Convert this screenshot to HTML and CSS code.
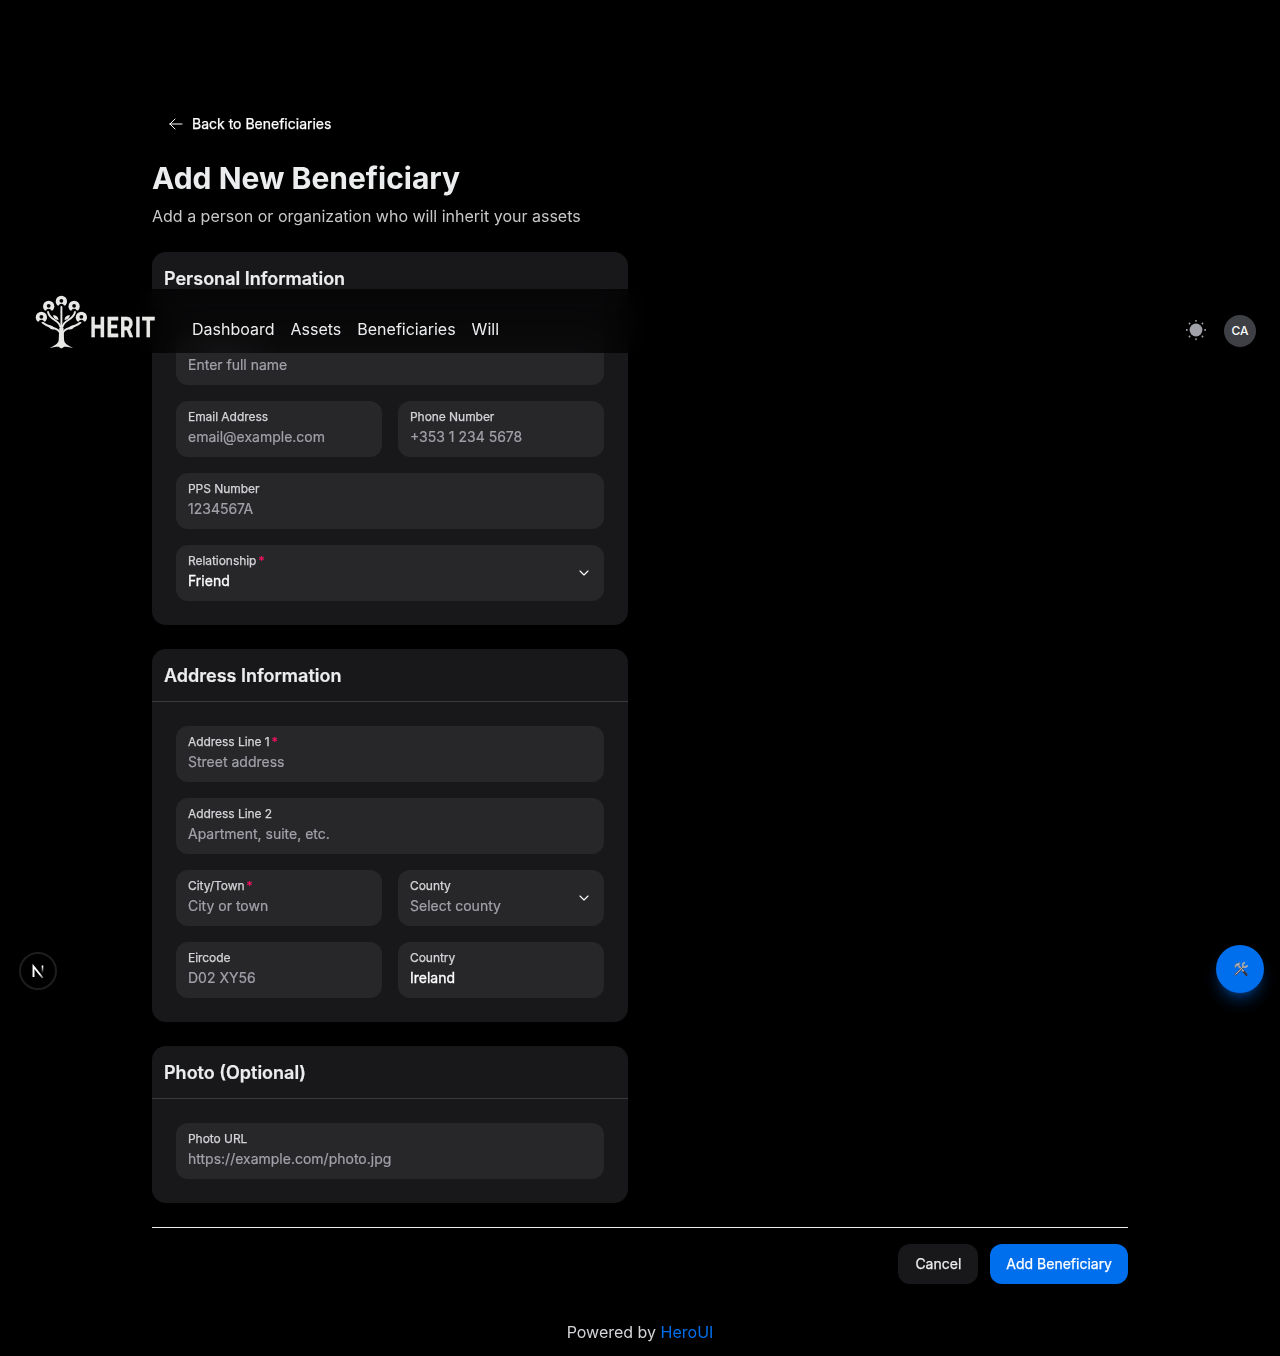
FILE: index.html
```html
<!DOCTYPE html>
<html lang="en">
<head>
<meta charset="utf-8">
<title>Add New Beneficiary</title>
<link rel="stylesheet" href="styles.css">
</head>
<body>
<nav class="navbar">
  <a class="brand" href="#" aria-label="Herit">
    <svg width="136" height="64" viewBox="0 0 136 64" fill="none">
      <g stroke="#e8e8e6" stroke-linecap="round">
        <path d="M29.400 50V18" stroke-width="1.900"/>
        <path d="M28.400 46C28 38 18 40 10.500 33.500" stroke-width="1.900"/>
        <path d="M30.400 46C31 38 41 40 48.500 33.500" stroke-width="1.900"/>
        <path d="M28.400 38C27 30 18 32 16 23" stroke-width="1.900"/>
        <path d="M30.400 38C32 30 41 32 43 23" stroke-width="1.900"/>
      </g>
      <path fill="#e8e8e6" d="M27.300 39h4.200l.6 12c.3 4 4 5.500 9 7.700-5-.5-7.500-1.300-9-.9-1 .8-1.600 1.500-2.700 1.500s-1.700-.7-2.700-1.500c-1.500-.4-4 .4-9 .9 5-2.200 8.700-3.700 9-7.700z"/>
      <path fill="#e8e8e6" d="M26.500 31c-3.500-.2-5.300-2-5.400-5 3.400.2 5.300 2 5.400 5zM32.500 31c3.500-.2 5.300-2 5.400-5-3.400.2-5.300 2-5.400 5zM22 40.500c-3.300.2-5-1.300-5.300-4.200 3.300 0 5.200 1.400 5.300 4.200zM37 40.500c3.300.2 5-1.300 5.300-4.200-3.300 0-5.200 1.400-5.300 4.200z"/>
      <g id="member">
        <path fill="#e8e8e6" d="M25.500 16.500c-1.200-1-1.700-2.700-1.700-4.200a5.600 5.600 0 0 1 11.200 0c0 1.500-.5 3.200-1.700 4.200z"/>
        <circle cx="29.400" cy="11.800" r="1.900" fill="#060606"/>
        <path fill="#060606" d="M26.800 17c.2-1.500 1.200-2.200 2.600-2.200s2.400.7 2.600 2.200z"/>
      </g>
      <use href="#member" x="-12.700" y="5"/>
      <use href="#member" x="12.700" y="5"/>
      <use href="#member" x="-20" y="16"/>
      <use href="#member" x="20" y="16"/>
      <text class="wordmark" x="58.300" y="48" textLength="66" lengthAdjust="spacingAndGlyphs">HERIT</text>
    </svg>
  </a>
  <div class="nav-links">
    <a href="#">Dashboard</a><a href="#">Assets</a><a href="#">Beneficiaries</a><a href="#">Will</a>
  </div>
  <div class="nav-actions">
    <svg class="sun" width="22" height="22" viewBox="0 0 24 24" fill="#a1a1aa"><path d="M19 12a7 7 0 1 1-7-7 7 7 0 0 1 7 7z"/><path d="M12 22.960a.969.969 0 0 1-1-.960v-.080a1 1 0 0 1 2 0 1.038 1.038 0 0 1-1 1.040zm7.140-2.820a1.024 1.024 0 0 1-.710-.290l-.130-.130a1 1 0 0 1 1.410-1.410l.130.130a1 1 0 0 1 0 1.410.984.984 0 0 1-.700.290zm-14.280 0a1.024 1.024 0 0 1-.710-.290 1 1 0 0 1 0-1.410l.130-.130a1 1 0 0 1 1.410 1.410l-.130.130a1 1 0 0 1-.700.290zM22 13h-.080a1 1 0 0 1 0-2 1.038 1.038 0 0 1 1.040 1 .969.969 0 0 1-.960 1zM2.080 13H2a1 1 0 0 1 0-2 1.038 1.038 0 0 1 1.040 1 .969.969 0 0 1-.960 1zm16.930-7.010a1.024 1.024 0 0 1-.710-.290 1 1 0 0 1 0-1.410l.130-.130a1 1 0 0 1 1.410 1.410l-.130.130a.984.984 0 0 1-.700.290zm-14.020 0a1.024 1.024 0 0 1-.710-.290l-.130-.140a1 1 0 0 1 1.410-1.410l.130.130a1 1 0 0 1 0 1.410.970.970 0 0 1-.700.300zM12 3.040a.969.969 0 0 1-1-.960V2a1 1 0 0 1 2 0 1.038 1.038 0 0 1-1 1.040z"/></svg>
    <span class="avatar">CA</span>
  </div>
</nav>

<main class="page">
  <a class="back" href="#">
    <svg width="16" height="16" viewBox="0 0 24 24" fill="none" stroke="currentColor" stroke-width="1.500" stroke-linecap="round" stroke-linejoin="round"><path d="M10.500 19.500 3 12m0 0 7.500-7.500M3 12h18"/></svg>
    Back to Beneficiaries
  </a>
  <h1>Add New Beneficiary</h1>
  <p class="lead">Add a person or organization who will inherit your assets</p>

  <form class="form">
    <section class="card">
      <h2>Personal Information</h2>
      <div class="fields">
        <div class="field wide name"><span class="hint">Enter full name</span></div>
        <div class="field"><span class="label">Email Address</span><span class="hint">email@example.com</span></div>
        <div class="field"><span class="label">Phone Number</span><span class="hint">+353 1 234 5678</span></div>
        <div class="field wide"><span class="label">PPS Number</span><span class="hint">1234567A</span></div>
        <div class="field wide select"><div class="stack"><span class="label">Relationship<i>*</i></span><span class="value">Friend</span></div>
          <svg width="16" height="16" viewBox="0 0 24 24" fill="none" stroke="#fff" stroke-width="1.700" stroke-linecap="round" stroke-linejoin="round"><path d="m6 9 6 6 6-6"/></svg></div>
      </div>
    </section>

    <section class="card">
      <h2>Address Information</h2>
      <div class="fields">
        <div class="field wide"><span class="label">Address Line 1<i>*</i></span><span class="hint">Street address</span></div>
        <div class="field wide"><span class="label">Address Line 2</span><span class="hint">Apartment, suite, etc.</span></div>
        <div class="field"><span class="label">City/Town<i>*</i></span><span class="hint">City or town</span></div>
        <div class="field select"><div class="stack"><span class="label">County</span><span class="hint">Select county</span></div>
          <svg width="16" height="16" viewBox="0 0 24 24" fill="none" stroke="#fff" stroke-width="1.700" stroke-linecap="round" stroke-linejoin="round"><path d="m6 9 6 6 6-6"/></svg></div>
        <div class="field"><span class="label">Eircode</span><span class="hint">D02 XY56</span></div>
        <div class="field"><span class="label">Country</span><span class="value">Ireland</span></div>
      </div>
    </section>

    <section class="card">
      <h2>Photo (Optional)</h2>
      <div class="fields">
        <div class="field wide"><span class="label">Photo URL</span><span class="hint">https://example.com/photo.jpg</span></div>
      </div>
    </section>
  </form>

  <div class="actions">
    <button class="btn cancel" type="button">Cancel</button>
    <button class="btn primary" type="button">Add Beneficiary</button>
  </div>
</main>

<footer class="footer">Powered by <a href="#">HeroUI</a></footer>

<div class="dev-badge">
  <svg width="36" height="36" viewBox="0 0 36 36" fill="none">
    <defs>
      <linearGradient id="fadeA" x1="15" y1="16" x2="22.500" y2="24" gradientUnits="userSpaceOnUse"><stop offset=".5" stop-color="#fff"/><stop offset="1" stop-color="#fff" stop-opacity=".3"/></linearGradient>
      <linearGradient id="fadeB" x1="0" y1="11" x2="0" y2="19" gradientUnits="userSpaceOnUse"><stop offset=".2" stop-color="#fff"/><stop offset="1" stop-color="#fff" stop-opacity="0"/></linearGradient>
    </defs>
    <path d="M12.500 23V12.500L21.800 24" stroke="url(#fadeA)" stroke-width="1.900"/>
    <path d="M21.500 11.500v7.500" stroke="url(#fadeB)" stroke-width="1.600"/>
  </svg>
</div>

<button class="tools" type="button" aria-label="Tools">
  <svg width="16" height="16" viewBox="0 0 16 16" fill="none" stroke-linecap="round">
    <path d="m10 9.800 3.400 4" stroke="#3f3438" stroke-width="2.400"/>
    <path d="m4.800 4.200 5.400 5.600" stroke="#b0a5a2" stroke-width="1.700"/>
    <path d="M2.600 13.600 11 5.200" stroke="#55535a" stroke-width="2.100"/>
    <path d="m2.800 13.200 8-8" stroke="#c4c4ca" stroke-width=".9"/>
    <path d="M11.300 1.800c-1.500.7-2 2.100-1.200 3.400.9 1.200 2.900 1.100 4.100-.3" stroke="#a8a9af" stroke-width="1.800"/>
    <path d="M1.600 5.500c.5-2 1.700-3 3.200-3.200l2.200-.7-.3 2.200-1.600 1.400-1.200-.8-1.400 2z" fill="#bababf" stroke="#77777e" stroke-width=".7"/>
  </svg>
</button>
</body>
</html>
```
FILE: styles.css
```css
* { box-sizing: border-box; }
body {
  margin: 0;
  min-height: 1356px;
  position: relative;
  background: #000;
  color: #ecedee;
  font: 16px/24px Inter, sans-serif;
}
a { color: inherit; text-decoration: none; }
h1, h2, p { margin: 0; }

/* floating navigation over the page */
.navbar {
  position: absolute;
  z-index: 10;
  top: 289px;
  left: 0;
  right: 0;
  height: 64px;
  padding: 0 24px 0 32px;
  display: flex;
  align-items: center;
  background:
    radial-gradient(60px 24px at 222px 60px, rgba(255, 255, 255, .03), transparent),
    rgba(0, 0, 0, .7);
  backdrop-filter: blur(16px) saturate(1.5);
}
.brand { display: flex; height: 64px; }
.wordmark {
  font: 700 27px Roboto, sans-serif;
  letter-spacing: 1.500px;
  fill: #e8e8e6;
  stroke: #e8e8e6;
  stroke-width: .3px;
}
.nav-links { display: flex; gap: 16px; margin-left: 24px; padding-top: 16px; height: 64px; line-height: 48px; }
.nav-actions { display: flex; align-items: center; gap: 17px; margin: 20px 0 0 auto; }
.sun { margin-bottom: 3px; }
.avatar {
  width: 32px; height: 32px;
  border-radius: 50%;
  background: #3f3f46;
  color: #fff;
  font-size: 12px;
  font-weight: 500;
  line-height: 32px;
  text-align: center;
}

.page { width: 976px; margin: 0 auto; padding-top: 104px; }
.back {
  display: flex;
  align-items: center;
  gap: 8px;
  width: max-content;
  height: 40px;
  padding: 0 16px;
  color: #fff;
  font-size: 14px;
  -webkit-text-stroke: .25px;
}
h1 { margin-top: 16px; font-size: 30px; line-height: 36px; font-weight: 700; }
.lead { margin-top: 8px; color: #c8c8c9; }

.form { width: 476px; margin-top: 24px; display: flex; flex-direction: column; gap: 24px; }
.card { background: #18181b; border-radius: 14px; }
.card h2 {
  height: 53px;
  padding: 13px 12px 11px;
  border-bottom: 1px solid #3a3a3d;
  font-size: 18px;
  line-height: 28px;
  font-weight: 600;
  -webkit-text-stroke: .2px;
}
.fields { display: grid; grid-template-columns: 1fr 1fr; gap: 16px; padding: 24px; }
.field {
  height: 56px;
  padding: 8px 12px;
  border-radius: 12px;
  background: #27272a;
  display: flex;
  flex-direction: column;
}
.wide { grid-column: span 2; }
.name { padding-top: 24px; }
.stack { display: flex; flex-direction: column; align-self: flex-start; }
.select { flex-direction: row; align-items: center; justify-content: space-between; }
.label { color: #d4d4d8; font-size: 12px; line-height: 16px; letter-spacing: -.05px; -webkit-text-stroke: .25px; }
.label i { color: #f31260; font-style: normal; margin-left: 2px; }
.hint, .value { font-size: 14px; line-height: 20px; padding-top: 2px; -webkit-text-stroke: .2px; }
.hint { color: #a1a1aa; }
.value { color: #fff; -webkit-text-stroke: .3px; }

.actions {
  display: flex;
  justify-content: flex-end;
  gap: 12px;
  margin-top: 24px;
  padding-top: 16px;
  border-top: 1px solid #ecedee;
}
.btn {
  height: 40px;
  padding: 0 16px;
  border: 0;
  border-radius: 12px;
  background: #18181b;
  color: #ecedee;
  font: 14px/20px Inter, sans-serif;
  -webkit-text-stroke: .25px;
}
.btn.cancel { padding: 0 17px; }
.btn.primary { background: #006fee; color: #fff; }

.footer { margin-top: 36px; color: #d4d4d8; text-align: center; }
.footer a { color: #006fee; }

.dev-badge {
  position: absolute;
  left: 19px;
  top: 952px;
  width: 38px;
  height: 38px;
  border: 2px solid #1e1e1e;
  border-radius: 50%;
  background: #000;
  display: grid;
  place-items: center;
}
.tools {
  position: absolute;
  left: 1216px;
  top: 945px;
  width: 48px;
  height: 48px;
  padding: 0 0 0 2px;
  border: 0;
  border-radius: 50%;
  background: #006fee;
  box-shadow: 0 10px 15px -3px rgba(0, 111, 238, .4), 0 4px 6px -4px rgba(0, 111, 238, .4);
  display: grid;
  place-items: center;
}
```
